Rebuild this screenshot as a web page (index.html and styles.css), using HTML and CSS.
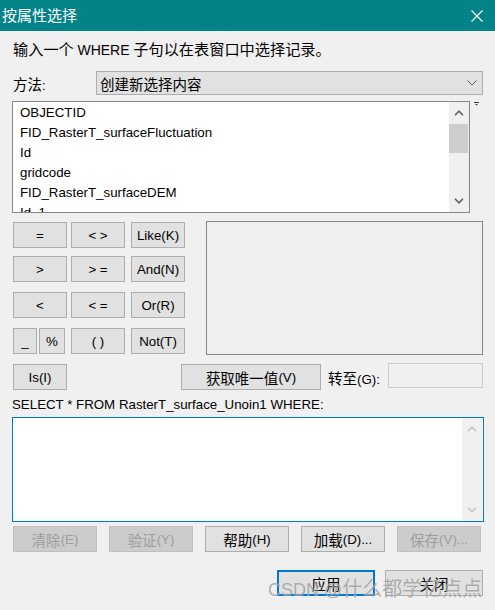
FILE: index.html
```html
<!DOCTYPE html>
<html lang="zh-CN">
<head>
<meta charset="utf-8">
<title>按属性选择</title>
<link rel="stylesheet" href="styles.css">
</head>
<body>
<div class="window">
  <header class="titlebar">
    <span class="title">按属性选择</span>
    <svg class="close" width="12" height="12" viewBox="0 0 12 12"><path d="M0.5 0.5L11.5 11.5M11.5 0.5L0.5 11.5" stroke="#ffffff" stroke-width="1.2" fill="none"/></svg>
  </header>
  <main class="content">
    <p class="intro"><span class="zh-l">输入一个</span> <span class="kw">WHERE</span> <span class="zh-l">子句以在表窗口中选择记录。</span></p>

    <div class="method-row">
      <span class="label"><span class="zh">方法</span>:</span>
      <div class="select">
        <span class="zh">创建新选择内容</span>
        <svg class="chev" width="10" height="6" viewBox="0 0 10 6"><path d="M0.5 0.5L5 5L9.5 0.5" stroke="#5a5a5a" stroke-width="1" fill="none"/></svg>
      </div>
    </div>

    <div class="list-row">
      <div class="listbox">
        <ul class="fields">
          <li>OBJECTID</li>
          <li>FID_RasterT_surfaceFluctuation</li>
          <li>Id</li>
          <li>gridcode</li>
          <li>FID_RasterT_surfaceDEM</li>
          <li>Id_1</li>
        </ul>
        <div class="vscroll">
          <div class="sb-btn"><svg width="10" height="6" viewBox="0 0 10 6"><path d="M1 5.2L5 1.2L9 5.2" stroke="#606060" stroke-width="1.6" fill="none"/></svg></div>
          <div class="track"><div class="thumb"></div></div>
          <div class="sb-btn"><svg width="10" height="6" viewBox="0 0 10 6"><path d="M1 0.8L5 4.8L9 0.8" stroke="#606060" stroke-width="1.6" fill="none"/></svg></div>
        </div>
      </div>
      <svg class="mini" width="5" height="4" viewBox="0 0 5 4"><rect x="0" y="0" width="5" height="1" fill="#3c3c3c"/><path d="M1 2H4L2.5 3.6Z" fill="#3c3c3c"/></svg>
    </div>

    <div class="ops-row">
      <div class="ops">
        <div class="op-line">
          <button class="btn op">=</button>
          <button class="btn op gap4">&lt; &gt;</button>
          <button class="btn op gap6">Like(K)</button>
        </div>
        <div class="op-line">
          <button class="btn op">&gt;</button>
          <button class="btn op gap4">&gt; =</button>
          <button class="btn op gap6">And(N)</button>
        </div>
        <div class="op-line">
          <button class="btn op">&lt;</button>
          <button class="btn op gap4">&lt; =</button>
          <button class="btn op gap6">Or(R)</button>
        </div>
        <div class="op-line">
          <button class="btn under">_</button>
          <button class="btn pct">%</button>
          <button class="btn op gap6">( )</button>
          <button class="btn op gap6">Not(T)</button>
        </div>
      </div>
      <div class="values"></div>
    </div>

    <div class="unique-row">
      <button class="btn op">Is(I)</button>
      <button class="btn unique"><span class="zh">获取唯一值</span>(V)</button>
      <span class="goto"><span class="zh">转至</span>(G):</span>
      <div class="goto-input"></div>
    </div>

    <p class="sql-label">SELECT * FROM RasterT_surface_Unoin1 WHERE:</p>
    <div class="sqlbox">
      <div class="vscroll light">
        <div class="sb-btn"><svg width="10" height="6" viewBox="0 0 10 6"><path d="M1 5.2L5 1.2L9 5.2" stroke="#c4c4c4" stroke-width="1.6" fill="none"/></svg></div>
        <div class="track"></div>
        <div class="sb-btn"><svg width="10" height="6" viewBox="0 0 10 6"><path d="M1 0.8L5 4.8L9 0.8" stroke="#c4c4c4" stroke-width="1.6" fill="none"/></svg></div>
      </div>
    </div>

    <div class="actions">
      <button class="btn act disabled"><span class="zh">清除</span>(E)</button>
      <button class="btn act disabled"><span class="zh">验证</span>(Y)</button>
      <button class="btn act"><span class="zh">帮助</span>(H)</button>
      <button class="btn act"><span class="zh">加载</span>(D)...</button>
      <button class="btn act disabled"><span class="zh">保存</span>(V)...</button>
    </div>

    <div class="final-row">
      <button class="btn final primary"><span class="zh">应用</span></button>
      <button class="btn final"><span class="zh">关闭</span></button>
    </div>
  </main>
  <div class="watermark">CSDN @<span class="wm-zh">什么都学亿点点</span></div>
</div>
</body>
</html>
```

FILE: styles.css
```css
html, body {
  margin: 0;
  padding: 0;
  background: #f0f0f0;
}

body {
  font-family: "Liberation Sans", "Noto Sans CJK SC", sans-serif;
  font-size: 13.3px;
  color: #000;
}

.window {
  position: relative;
  width: 495px;
  height: 610px;
  overflow: hidden;
  background: #f0f0f0;
}

.zh {
  font-size: 14.5px;
}

.zh-l {
  font-size: 15.2px;
}

.kw {
  font-size: 14px;
}

.titlebar {
  height: 31px;
  box-sizing: border-box;
  background: #038387;
  color: #fff;
  display: flex;
  align-items: center;
  justify-content: space-between;
  padding: 0 12px 0 2px;
}

.title {
  font-size: 15px;
  line-height: 18px;
}

.close {
  display: block;
}

.content {
  display: flex;
  flex-direction: column;
}

.intro {
  margin: 9px 0 0 13px;
  height: 20px;
  line-height: 20px;
  white-space: pre;
}

.method-row {
  display: flex;
  align-items: center;
  margin-top: 11px;
  padding-left: 13px;
  height: 24px;
}

.method-row .label {
  width: 83px;
}

.select {
  width: 387px;
  height: 24px;
  box-sizing: border-box;
  border: 1px solid #adadad;
  background: #e1e1e1;
  display: flex;
  align-items: center;
  justify-content: space-between;
  padding: 0 5px 0 3px;
}

.chev {
  display: block;
}

.list-row {
  display: flex;
  align-items: flex-start;
  margin-top: 6px;
  padding-left: 12px;
}

.listbox {
  width: 458px;
  height: 112px;
  box-sizing: border-box;
  border: 1px solid #828790;
  background: #fff;
  display: flex;
  overflow: hidden;
}

.fields {
  list-style: none;
  margin: 0;
  padding: 1px 0 0 7px;
  flex: 1;
  overflow: hidden;
}

.fields li {
  height: 20px;
  line-height: 20px;
  white-space: nowrap;
}

.vscroll {
  width: 20px;
  flex: none;
  background: #f0f0f0;
  display: flex;
  flex-direction: column;
}

.sb-btn {
  height: 22px;
  display: flex;
  align-items: center;
  justify-content: center;
}

.sb-btn svg {
  display: block;
}

.track {
  flex: 1;
}

.thumb {
  width: 19px;
  height: 29px;
  background: #cdcdcd;
}

.mini {
  margin: 1px 0 0 4px;
  display: block;
}

.ops-row {
  display: flex;
  align-items: flex-start;
  margin-top: 8px;
  padding-left: 13px;
}

.ops {
  width: 193px;
  padding-top: 1px;
  display: flex;
  flex-direction: column;
}

.op-line {
  display: flex;
  height: 26px;
  margin-top: 10px;
}

.op-line:first-child {
  margin-top: 0;
}

.op-line:nth-child(2) {
  margin-top: 8px;
}

.btn {
  box-sizing: border-box;
  height: 26px;
  margin: 0;
  padding: 0;
  border: 1px solid #adadad;
  background: #e1e1e1;
  font: inherit;
  color: #000;
  display: flex;
  align-items: center;
  justify-content: center;
  white-space: nowrap;
}

.op {
  width: 54px;
}

.gap4 {
  margin-left: 4px;
}

.gap6 {
  margin-left: 6px;
}

.under {
  width: 24px;
}

.pct {
  width: 26px;
  margin-left: 2px;
}

.values {
  width: 277px;
  height: 134px;
  box-sizing: border-box;
  border: 1px solid #828790;
  background: #f0f0f0;
}

.unique-row {
  display: flex;
  align-items: center;
  margin-top: 9px;
  padding: 0 12px 0 13px;
  height: 26px;
}

.unique {
  width: 140px;
  margin-left: 114px;
}

.goto {
  margin-left: 7px;
}

.goto-input {
  margin-left: auto;
  align-self: flex-start;
  margin-top: -1px;
  width: 95px;
  height: 25px;
  box-sizing: border-box;
  border: 1px solid #cccccc;
  background: #f0f0f0;
}

.sql-label {
  margin: 7px 0 0 12px;
  height: 16px;
  line-height: 16px;
}

.sqlbox {
  margin: 4px 0 0 12px;
  width: 472px;
  height: 105px;
  box-sizing: border-box;
  border: 1px solid #0078d7;
  background: #fff;
  display: flex;
  justify-content: flex-end;
  padding-right: 1px;
}

.actions {
  display: flex;
  gap: 12px;
  margin-top: 4px;
  padding-left: 13px;
}

.act {
  width: 84px;
}

.disabled {
  background: #cccccc;
  border-color: #bfbfbf;
  color: #9d9d9d;
}

.final-row {
  display: flex;
  justify-content: flex-end;
  gap: 10px;
  margin-top: 18px;
  padding-right: 12px;
}

.final {
  width: 98px;
}

.primary {
  border: 2px solid #0078d7;
}

.watermark {
  position: absolute;
  left: 268px;
  top: 576px;
  font-size: 18px;
  line-height: 26px;
  color: rgba(105, 105, 105, 0.55);
  text-shadow: 0 0 1px rgba(255, 255, 255, 0.7);
  white-space: nowrap;
}

.wm-zh {
  font-size: 20px;
}
```
